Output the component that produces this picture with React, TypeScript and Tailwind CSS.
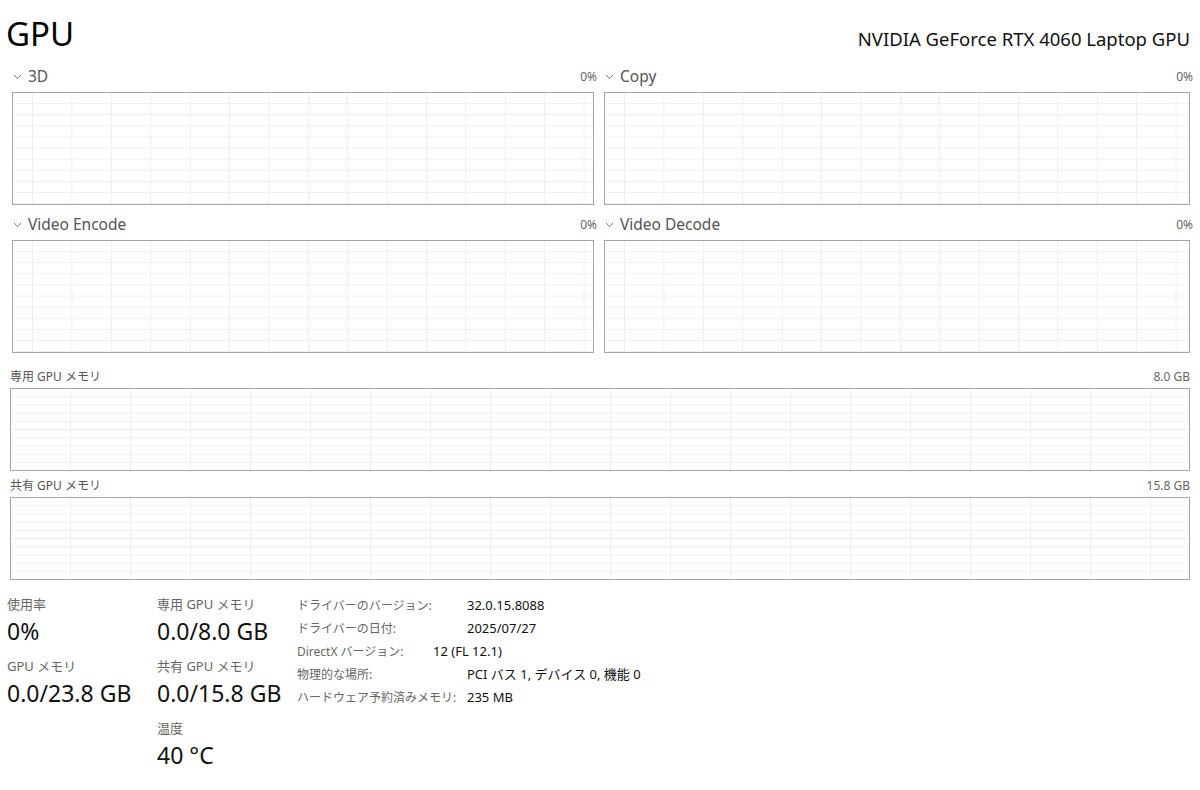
import React from 'react';

const font = { fontFamily: '"Noto Sans", "Noto Sans CJK JP", sans-serif' };

function Chevron() {
  return (
    <svg width="9" height="6" viewBox="0 0 9 6" className="shrink-0">
      <polyline points="1,1 4.5,4.5 8,1" fill="none" stroke="#777" strokeWidth="1" />
    </svg>
  );
}

// grid drawing inside a graph box
function Grid({ cellW, cellH, offsetX }: { cellW: number; cellH: number; offsetX: number }) {
  const id = `g-${cellW}-${cellH}-${offsetX}`;
  return (
    <svg className="block h-full w-full">
      <defs>
        <pattern id={id} x={offsetX} y={0} width={cellW} height={cellH} patternUnits="userSpaceOnUse">
          <path d={`M 0.5 0 L 0.5 ${cellH} M 0 ${cellH - 0.5} L ${cellW} ${cellH - 0.5}`} fill="none" stroke="#efefef" strokeWidth="1" />
        </pattern>
      </defs>
      <rect width="100%" height="100%" fill={`url(#${id})`} />
    </svg>
  );
}

function SmallGraph({ title }: { title: string }) {
  return (
    <div className="flex flex-col">
      <div className="flex h-[22px] items-center justify-between">
        <div className="flex items-center gap-[6px] pl-[1px]">
          <Chevron />
          <span className="text-[15.5px] text-[#555]">{title}</span>
        </div>
        <span className="-mr-[3px] text-[12px] text-[#666]">0%</span>
      </div>
      <div className="mt-[4px] h-[113px] border border-[#a6a6a6] bg-white">
        <Grid cellW={39.4} cellH={11.1} offsetX={19} />
      </div>
    </div>
  );
}

function WideGraph({ title, max }: { title: string; max: string }) {
  return (
    <div className="flex flex-col">
      <div className="flex h-[18px] items-center justify-between">
        <span className="text-[12px] text-[#555]">{title}</span>
        <span className="text-[12px] text-[#666]">{max}</span>
      </div>
      <div className="mt-[2px] h-[83px] border border-[#a6a6a6] bg-white">
        <Grid cellW={60} cellH={8.2} offsetX={59} />
      </div>
    </div>
  );
}

function Stat({ label, value }: { label: string; value: string }) {
  return (
    <div className="flex h-[62px] flex-col">
      <span className="h-[20px] text-[13px] leading-[20px] text-[#666]">{label}</span>
      <span className="mt-[2px] whitespace-nowrap text-[23px] leading-[30px] text-[#111]">{value}</span>
    </div>
  );
}

const details = [
  { label: 'ドライバーのバージョン:', value: '32.0.15.8088', w: 'w-[170px]' },
  { label: 'ドライバーの日付:', value: '2025/07/27', w: 'w-[170px]' },
  { label: 'DirectX バージョン:', value: '12 (FL 12.1)', w: 'w-[136px]' },
  { label: '物理的な場所:', value: 'PCI バス 1, デバイス 0, 機能 0', w: 'w-[170px]' },
  { label: 'ハードウェア予約済みメモリ:', value: '235 MB', w: 'w-[170px]' },
];

export default function App() {
  return (
    <div className="h-[790px] w-[1200px] overflow-hidden bg-white" style={font}>
      <div className="flex h-[62px] items-start justify-between pl-[6px] pr-[10px]">
        <h1 className="mt-[12px] text-[33px] font-normal leading-[44px] text-black">GPU</h1>
        <span className="mt-[26px] text-[18.5px] leading-[26px] text-[#111]">NVIDIA GeForce RTX 4060 Laptop GPU</span>
      </div>

      <div className="grid grid-cols-[582px_586px] gap-x-[10px] gap-y-[9px] pl-[12px] pt-[4px]">
        <SmallGraph title="3D" />
        <SmallGraph title="Copy" />
        <SmallGraph title="Video Encode" />
        <SmallGraph title="Video Decode" />
      </div>

      <div className="mt-[15px] flex flex-col gap-[6px] pl-[10px] pr-[10px]">
        <WideGraph title="専用 GPU メモリ" max="8.0 GB" />
        <WideGraph title="共有 GPU メモリ" max="15.8 GB" />
      </div>

      <div className="mt-[14px] flex pl-[7px]">
        <div className="w-[150px]">
          <Stat label="使用率" value="0%" />
          <Stat label="GPU メモリ" value="0.0/23.8 GB" />
        </div>
        <div className="w-[140px]">
          <Stat label="専用 GPU メモリ" value="0.0/8.0 GB" />
          <Stat label="共有 GPU メモリ" value="0.0/15.8 GB" />
          <Stat label="温度" value="40 °C" />
        </div>
        <div className="flex flex-col">
          {details.map((d) => (
            <div key={d.label} className="flex h-[23px] items-center whitespace-nowrap">
              <span className={`${d.w} text-[12px] text-[#666]`}>{d.label}</span>
              <span className="text-[13px] text-[#111]">{d.value}</span>
            </div>
          ))}
        </div>
      </div>
    </div>
  );
}
